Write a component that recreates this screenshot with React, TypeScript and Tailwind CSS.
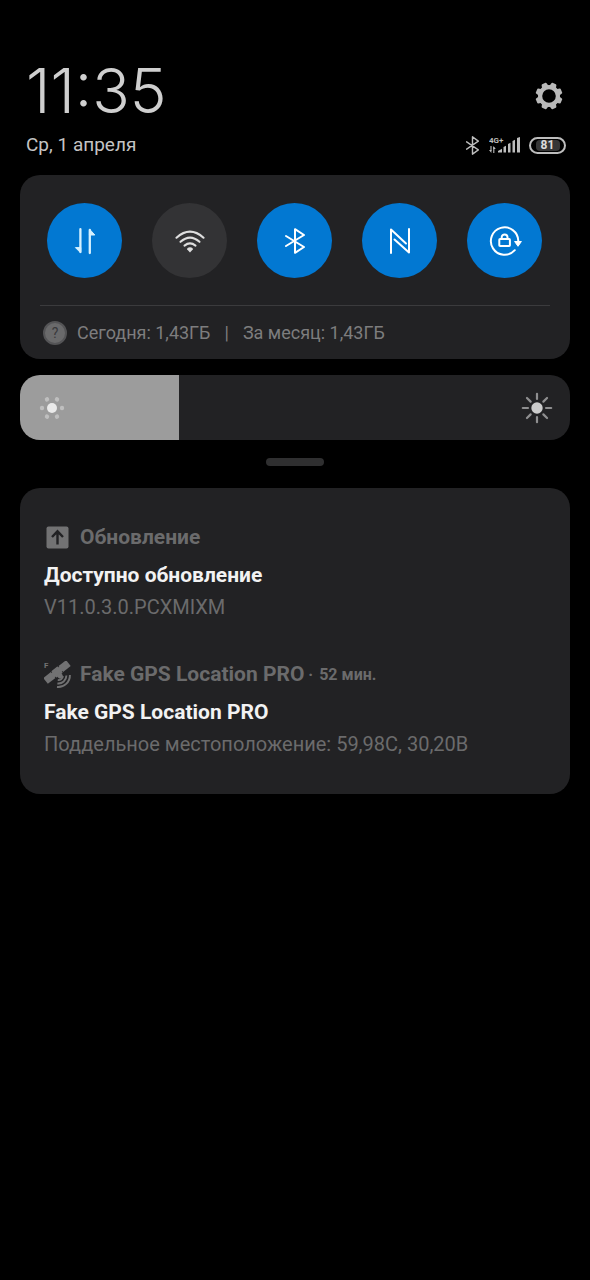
import { useState } from "react";

interface Tile {
    label: string;
    active: boolean;
    icon: React.ReactNode;
}

interface NotificationProps {
    app: string;
    time?: string;
    title: string;
    text: string;
    icon: React.ReactNode;
}

const GearIcon = () => (
    <svg viewBox="-14 -14 28 28" className="size-7" fill="#b9b9b9">
        {[22.5, 67.5, 112.5, 157.5, 202.5, 247.5, 292.5, 337.5].map(a => (
            <path key={a} transform={`rotate(${a})`} d="M-3.6 -9 L-2.7 -12.8 Q-2.5 -13.5 -1.8 -13.5 H1.8 Q2.5 -13.5 2.7 -12.8 L3.6 -9 Z" />
        ))}
        <circle r="8.9" fill="none" stroke="#b9b9b9" strokeWidth="4.2" />
    </svg>
);

const BluetoothIcon = ({ className, width }: { className: string; width: number }) => (
    <svg viewBox="0 0 20 26" preserveAspectRatio="none" className={className} fill="none" stroke="currentColor" strokeWidth={width} strokeLinejoin="round" strokeLinecap="round">
        <path d="M1 8 L19 19 L10 24.8 V1.2 L19 7 L1 18" />
    </svg>
);

const SignalIcon = () => (
    <svg viewBox="0 0 32 20" className="h-5 w-8" fill="#bdbdbd">
        <text x="0" y="8" fontSize="8" fontWeight="700" fontFamily="Roboto, sans-serif">4G+</text>
        <path d="M2 11 V16 M4.8 18 V12" stroke="#bdbdbd" strokeWidth="1.1" />
        <path d="M0 15 H2.4 V18 Z M4.3 11 L6.8 14 H4.3 Z" />
        <path d="M9 17.5 V16 L13 13.7 V17.5 Z" />
        <path d="M14.5 17.5 V12 L17 10.7 V17.5 Z M19 17.5 V9 L21.5 7.7 V17.5 Z M23.5 17.5 V6 L26 4.7 V17.5 Z M28 17.5 V3 L31 2 V17.5 Z" />
    </svg>
);

const DataIcon = () => (
    <svg viewBox="0 0 24 28" className="h-7 w-6" stroke="#d6f1ff" strokeLinecap="round" strokeLinejoin="round">
        <path d="M7.4 2.2 V25 M16.8 26 V3" fill="none" strokeWidth="2.3" />
        <path d="M7.4 25.6 L2.4 20.6 H7.4 Z M16.8 2.4 L21.8 8 H16.8 Z" fill="#d6f1ff" strokeWidth="1" />
    </svg>
);

const WifiIcon = () => (
    <svg viewBox="0 0 32 24" className="h-6 w-8" fill="none" stroke="#dedede" strokeWidth="2.1" strokeLinecap="round">
        <path d="M2.5 8.7 Q16 -3.3 29.5 8.7" />
        <path d="M6.5 12.8 Q16 4.4 25.5 12.8" />
        <path d="M10.5 16.6 Q16 12.2 21.5 16.6" />
        <path d="M16 23.4 L13.2 20.6 Q12.8 18.5 16 18.3 Q19.2 18.5 18.8 20.6 Z" fill="#dedede" stroke="none" />
    </svg>
);

const NfcIcon = () => (
    <svg viewBox="0 0 22 28" className="h-7 w-[22px]" fill="none" stroke="#fff" strokeWidth="2" strokeLinejoin="round" strokeLinecap="round">
        <path d="M2 26 V2.5 L17 16.5" />
        <path d="M20 2 V25.5 L5.5 12.5" />
    </svg>
);

const RotationIcon = () => (
    <svg viewBox="0 0 34 30" className="h-[30px] w-[34px]" fill="none" stroke="#fff" strokeWidth="2">
        <path d="M30.3 15 A13.7 13.7 0 1 0 26.8 24.2" strokeLinecap="round" />
        <path d="M26.6 15.5 H33.4 L30 20.3 Z" fill="#fff" strokeWidth="1" strokeLinejoin="round" />
        <rect x="11.3" y="13" width="10.6" height="7" rx="0.8" />
        <path d="M13.7 12.5 V11.3 A2.9 2.9 0 0 1 19.5 11.3 V12.5" />
    </svg>
);

const LowSunIcon = () => (
    <svg viewBox="-13 -13 26 26" className="size-[26px]">
        <circle r="5" fill="#eaeaea" />
        {[0, 60, 120, 180, 240, 300].map(a => (
            <circle key={a} cx="10" r="2.2" fill="#bfbfbf" transform={`rotate(${a})`} />
        ))}
    </svg>
);

const HighSunIcon = () => (
    <svg viewBox="-16 -16 32 32" className="size-8">
        <circle r="5.7" fill="#cccccc" />
        {[0, 45, 90, 135, 180, 225, 270, 315].map(a => (
            <path key={a} d="M9 0 H14.2" stroke="#8f8f90" strokeWidth="2.2" strokeLinecap="round" transform={`rotate(${a})`} />
        ))}
    </svg>
);

const UpdateIcon = () => (
    <svg viewBox="0 0 28 28" className="size-7">
        <rect x="2.5" y="2.5" width="22" height="22" rx="2" fill="#727273" />
        <path d="M13.5 20.5 V8 M8 13 L13.5 7.3 L19 13" fill="none" stroke="#222224" strokeWidth="2.4" />
    </svg>
);

const SatelliteIcon = () => (
    <svg viewBox="0 0 28 28" className="size-7" fill="#727273">
        <text x="0" y="7" fontSize="8" fontFamily="Roboto, sans-serif">F</text>
        <g transform="translate(13 11) rotate(-38)">
            <rect x="-14.5" y="-3.7" width="9.6" height="7.4" />
            <rect x="-4.2" y="-4.2" width="8.4" height="8.4" rx="1" />
            <rect x="4.9" y="-3.7" width="9.6" height="7.4" />
            <rect x="-6" y="-2.6" width="12" height="5.2" />
            <circle cy="5" r="2.6" />
        </g>
        <g fill="none" stroke="#727273" strokeWidth="1.9">
            <path d="M19 15.2 A4.6 4.6 0 0 1 13.8 19" />
            <path d="M22.4 14.6 A8 8 0 0 1 13.4 22.5" />
            <path d="M25.9 14 A11.7 11.7 0 0 1 13 26" />
        </g>
    </svg>
);

const tiles: Tile[] = [
    { label: "Мобильный интернет", active: true, icon: <DataIcon /> },
    { label: "Wi-Fi", active: false, icon: <WifiIcon /> },
    { label: "Bluetooth", active: true, icon: <BluetoothIcon className="h-[26px] w-5 text-white" width={2} /> },
    { label: "NFC", active: true, icon: <NfcIcon /> },
    { label: "Автоповорот", active: true, icon: <RotationIcon /> },
];

const Notification: React.FC<NotificationProps> = ({ app, time, title, text, icon }) => (
    <article>
        <div className="flex h-[39px] items-center font-bold text-[#6b6b6c]">
            {icon}
            <p className="ml-2 text-[21px]">{app}</p>
            {time && (
                <p className="ml-1 flex gap-1.5 text-base">
                    <span>·</span>
                    <span>{time}</span>
                </p>
            )}
        </div>
        <h3 className="text-[21px] leading-9 font-bold text-[#f2f2f2]">{title}</h3>
        <p className="text-xl leading-7 text-[#6b6b6c]">{text}</p>
    </article>
);

const App = () => {
    const [active, setActive] = useState(tiles.map(t => t.active));
    const [brightness, setBrightness] = useState(29);

    const toggle = (i: number) => setActive(active.map((v, n) => (n === i ? !v : v)));

    return (
        <main className="min-h-screen bg-black px-5 pt-[59px] font-['Roboto','Noto_Sans',sans-serif]">
            <header className="pr-1 pl-1.5">
                <div className="flex items-center justify-between">
                    <time className="font-['Inter',sans-serif] text-[62px] leading-[64px] font-light text-[#cfcfcf]">11:35</time>
                    <button aria-label="Настройки" className="mt-2.5 mr-[3px]">
                        <GearIcon />
                    </button>
                </div>
                <div className="mt-2 flex h-7 items-center justify-between">
                    <p className="text-[19px] text-[#c4c4c4]">Ср, 1 апреля</p>
                    <div className="flex items-center">
                        <BluetoothIcon className="mr-2.5 h-[19px] w-[13px] text-[#bdbdbd]" width={2.2} />
                        <SignalIcon />
                        <span className="ml-2 flex h-[17px] w-[37px] items-center justify-center rounded-full border-2 border-[#bdbdbd]">
                            <span className="w-6 rounded-sm bg-[#363636] text-center text-xs leading-[11px] font-bold text-[#dcdcdc]">81</span>
                        </span>
                    </div>
                </div>
            </header>

            <section className="mt-4 rounded-[20px] bg-[#222224] px-5 pt-7">
                <div className="flex justify-between pr-2 pl-[7px]">
                    {tiles.map((t, i) => (
                        <button
                            key={t.label}
                            aria-label={t.label}
                            aria-pressed={active[i]}
                            onClick={() => toggle(i)}
                            className={`flex size-[75px] items-center justify-center rounded-full ${active[i] ? "bg-[#0278d2]" : "bg-[#333335]"}`}
                        >
                            {t.icon}
                        </button>
                    ))}
                </div>
                <div className="mt-[27px] flex h-[54px] items-center border-t border-[#3b3b3d] pl-[3px] text-lg text-[#7d7d7e]">
                    <span className="flex size-6 items-center justify-center rounded-full border-2 border-[#545456] bg-[#6a6a6b] text-sm text-[#39393b]">?</span>
                    <span className="ml-2.5">Сегодня: 1,43ГБ</span>
                    <span className="mx-[14px]">|</span>
                    <span>За месяц: 1,43ГБ</span>
                </div>
            </section>

            <label className="relative mt-4 block h-[65px]">
                <input
                    type="range"
                    aria-label="Яркость"
                    min={0}
                    max={100}
                    value={brightness}
                    onChange={e => setBrightness(Number(e.target.value))}
                    className="block h-full w-full cursor-pointer appearance-none rounded-[20px] [&::-webkit-slider-thumb]:appearance-none"
                    style={{ background: `linear-gradient(to right, #9c9c9c ${brightness}%, #222224 ${brightness}%)` }}
                />
                <span className="pointer-events-none absolute inset-0 flex items-center justify-between pr-[17px] pl-[19px]">
                    <LowSunIcon />
                    <HighSunIcon />
                </span>
            </label>

            <div className="mx-auto mt-[18px] h-2 w-[58px] rounded-full bg-[#2f2f30]" />

            <section className="mt-[22px] flex flex-col gap-[34px] rounded-[20px] bg-[#222224] px-6 pt-[30px] pb-9">
                <Notification app="Обновление" title="Доступно обновление" text="V11.0.3.0.PCXMIXM" icon={<UpdateIcon />} />
                <Notification
                    app="Fake GPS Location PRO"
                    time="52 мин."
                    title="Fake GPS Location PRO"
                    text="Поддельное местоположение: 59,98С, 30,20В"
                    icon={<SatelliteIcon />}
                />
            </section>
        </main>
    );
};

export default App;
